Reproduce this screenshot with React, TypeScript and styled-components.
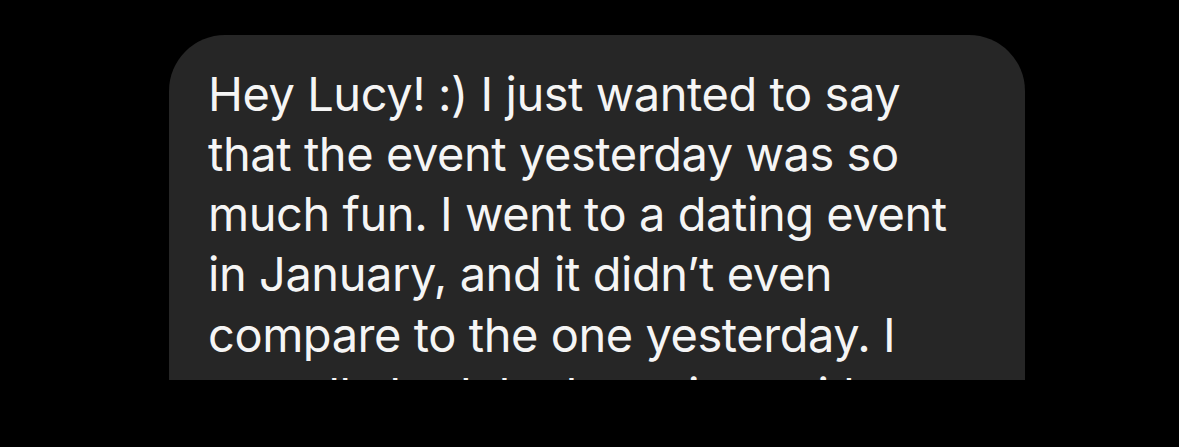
import styled, { createGlobalStyle } from "styled-components";

const GlobalStyle = createGlobalStyle`
  html, body {
    margin: 0;
    padding: 0;
    background: #000;
  }
  body {
    font-family: Inter, "Noto Sans", "Liberation Sans", sans-serif;
  }
`;

const Screen = styled.div`
  width: 1179px;
  height: 447px;
  background: #000;
  padding: 35px 0 0 169px;
  box-sizing: border-box;
`;

const Bubble = styled.div`
  width: 856px;
  height: 345px;
  box-sizing: border-box;
  padding: 28.5px 57px 0 39px;
  background: #262626;
  border-radius: 56px 56px 0 0;
  overflow: hidden;
`;

const Message = styled.p`
  margin: 0;
  color: #f5f5f5;
  font-size: 47px;
  line-height: 60.25px;
  letter-spacing: -0.45px;
`;

export default function App() {
  return (
    <>
      <GlobalStyle />
      <Screen>
        <Bubble>
          <Message>
            Hey Lucy! :) I just wanted to say that the event yesterday was so
            much fun. I went to a dating event in January, and it didn’t even
            compare to the one yesterday. I actually had the best time with
            everyone there.
          </Message>
        </Bubble>
      </Screen>
    </>
  );
}
